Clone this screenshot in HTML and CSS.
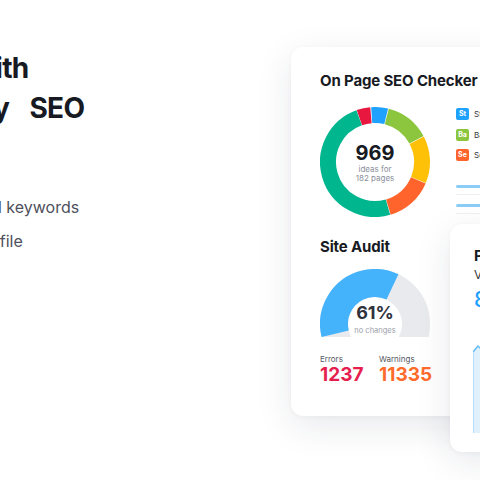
FILE: index.html
```html
<!DOCTYPE html>
<html lang="en">
<head>
<meta charset="utf-8">
<title>SEO tools</title>
<link rel="stylesheet" href="styles.css">
</head>
<body>
<div class="hero">
  <div class="copy">
    <h1 class="headline">Grow with<br>easy SEO</h1>
    <ul class="points">
      <li>Find all keywords</li>
      <li>Fix profile</li>
    </ul>
  </div>
  <div class="visual">
    <div class="card main-card">
      <h2 class="card-title">On Page SEO Checker</h2>
      <div class="checker">
        <div class="donut">
          <svg class="donut-svg" width="110" height="110" viewBox="0 0 110 110">
            <g fill="none" stroke-width="16">
              <circle cx="55" cy="55" r="47" stroke="#e8173f" stroke-dasharray="11.9 300" transform="rotate(250.6 55 55)"/>
              <circle cx="55" cy="55" r="47" stroke="#1ea1ff" stroke-dasharray="14.6 300" transform="rotate(266 55 55)"/>
              <circle cx="55" cy="55" r="47" stroke="#8cc63f" stroke-dasharray="38.8 300" transform="rotate(-75.5 55 55)"/>
              <circle cx="55" cy="55" r="47" stroke="#ffc107" stroke-dasharray="40.9 300" transform="rotate(-27.5 55 55)"/>
              <circle cx="55" cy="55" r="47" stroke="#ff642d" stroke-dasharray="41.3 300" transform="rotate(23 55 55)"/>
              <circle cx="55" cy="55" r="47" stroke="#00b68f" stroke-dasharray="144.3 300" transform="rotate(74 55 55)"/>
            </g>
          </svg>
          <div class="donut-center">
            <div class="donut-num">969</div>
            <div class="donut-sub">ideas for</div>
            <div class="donut-sub">182 pages</div>
          </div>
        </div>
        <div class="side">
          <ul class="legend">
            <li><span class="badge b-st">St</span><span class="legend-label">Strategy ideas</span></li>
            <li><span class="badge b-ba">Ba</span><span class="legend-label">Backlinks ideas</span></li>
            <li><span class="badge b-se">Se</span><span class="legend-label">Semantic ideas</span></li>
          </ul>
          <div class="bars">
            <div class="bar-row"><div class="bar"></div></div>
            <div class="bar-row"><div class="bar"></div></div>
          </div>
        </div>
      </div>
      <h2 class="card-title audit-title">Site Audit</h2>
      <div class="gauge">
        <svg class="gauge-svg" width="110" height="68" viewBox="0 0 110 68">
          <g fill="none" stroke-width="28">
            <circle cx="55" cy="55" r="41" stroke="#e9eaee"/>
            <circle cx="55" cy="55" r="41" stroke="#44b3fb" stroke-dasharray="92.1 300" transform="rotate(166.3 55 55)"/>
          </g>
        </svg>
        <div class="gauge-center">
          <div class="gauge-num">61%</div>
          <div class="gauge-sub">no changes</div>
        </div>
      </div>
      <div class="stats">
        <div class="stat">
          <div class="stat-label">Errors</div>
          <div class="stat-num err">1237</div>
        </div>
        <div class="stat">
          <div class="stat-label">Warnings</div>
          <div class="stat-num warn">11335</div>
        </div>
      </div>
    </div>
    <div class="card track-card">
      <h2 class="card-title">Position Tracking</h2>
      <div class="track-label">Visibility</div>
      <div class="track-num">84.21%</div>
      <svg class="chart" width="180" height="90" viewBox="0 0 180 90">
        <path d="M0 9 L5 3 L14 12 L30 18 L60 26 L100 20 L140 34 L180 30 L180 90 L0 90 Z" fill="#e0f1fd"/>
        <path d="M0 9 L5 3 L14 12 L30 18 L60 26 L100 20 L140 34 L180 30" fill="none" stroke="#63bdf6" stroke-width="1.5"/>
        <path d="M0.5 9 L0.5 90" stroke="#b9dff8" stroke-width="1"/>
      </svg>
    </div>
  </div>
</div>
</body>
</html>
```

FILE: styles.css
```css
* { box-sizing: border-box; }
html, body {
  margin: 0;
  padding: 0;
  background: #ffffff;
}
body {
  width: 480px;
  height: 480px;
  overflow: hidden;
  font-family: Inter, "Noto Sans", sans-serif;
  color: #171a22;
}
.hero {
  display: flex;
  height: 480px;
}
.copy {
  flex: 0 0 339px;
  margin-left: -48px;
}
.headline {
  margin: 48px 0 0 -6px;
  font-size: 28px;
  line-height: 40px;
  font-weight: 700;
  letter-spacing: -0.6px;
  word-spacing: 14px;
  text-indent: -64px;
  color: #171a22;
  white-space: nowrap;
}
.points {
  list-style: none;
  margin: 62px 0 0 -4px;
  padding: 0;
  font-size: 16px;
  line-height: 34px;
  color: #4e505b;
  white-space: nowrap;
}
.visual {
  position: relative;
  flex: 0 0 260px;
}
.card {
  background: #ffffff;
  border-radius: 12px;
  box-shadow: 0 10px 36px rgba(30, 40, 70, 0.10), 0 1px 4px rgba(30, 40, 70, 0.04);
}
.main-card {
  margin-top: 47px;
  width: 250px;
  height: 369px;
  padding: 25px 0 0 29px;
}
.card-title {
  margin: 0;
  font-size: 15px;
  line-height: 18px;
  font-weight: 700;
  letter-spacing: -0.15px;
  color: #171a22;
  white-space: nowrap;
}
.checker {
  display: flex;
  gap: 26px;
  margin-top: 17px;
}
.donut {
  display: grid;
  width: 110px;
  height: 110px;
  flex: 0 0 110px;
}
.donut-svg, .donut-center {
  grid-area: 1 / 1;
}
.donut-svg { display: block; }
.donut-center {
  align-self: center;
  text-align: center;
}
.donut-num {
  font-size: 20px;
  line-height: 23px;
  font-weight: 700;
  color: #171a22;
}
.donut-sub {
  font-size: 8px;
  line-height: 9px;
  color: #8a8e99;
}
.side {
  flex: 0 0 90px;
  padding-top: 1px;
}
.legend {
  list-style: none;
  margin: 0;
  padding: 0;
  display: flex;
  flex-direction: column;
  gap: 8.5px;
}
.legend li {
  display: flex;
  align-items: center;
  height: 12px;
}
.badge {
  width: 13px;
  height: 12px;
  border-radius: 2px;
  color: #fff;
  font-size: 7px;
  font-weight: 700;
  line-height: 12px;
  text-align: center;
}
.b-st { background: #1ea1ff; }
.b-ba { background: #8cc63f; }
.b-se { background: #ff642d; }
.legend-label {
  margin-left: 5px;
  font-size: 8px;
  color: #333640;
  white-space: nowrap;
}
.bars {
  margin-top: 24px;
}
.bar-row {
  padding-bottom: 6px;
  border-bottom: 1px solid #eff0f3;
}
.bar-row + .bar-row {
  margin-top: 9px;
}
.bar {
  height: 3px;
  width: 80px;
  border-radius: 2px;
  background: #8ccdf6;
}
.audit-title {
  margin-top: 21px;
}
.gauge {
  display: grid;
  width: 110px;
  height: 68px;
  margin-top: 13px;
}
.gauge-svg, .gauge-center {
  grid-area: 1 / 1;
}
.gauge-svg { display: block; }
.gauge-center {
  align-self: end;
  text-align: center;
  padding-bottom: 2px;
}
.gauge-num {
  font-size: 18px;
  line-height: 20px;
  font-weight: 700;
  color: #2f323b;
}
.gauge-sub {
  margin-top: 3px;
  font-size: 7.5px;
  line-height: 9px;
  color: #9a9ea8;
}
.stats {
  display: grid;
  grid-template-columns: 59px auto;
  margin-top: 18px;
}
.stat-label {
  font-size: 8px;
  line-height: 9px;
  color: #555864;
}
.stat-num {
  font-size: 19px;
  line-height: 22px;
  font-weight: 700;
}
.err { color: #e61e4d; }
.warn { color: #ff6b2b; }
.track-card {
  position: absolute;
  left: 159px;
  top: 224px;
  width: 200px;
  height: 228px;
  padding: 22.5px 0 0 24px;
  overflow: hidden;
}
.track-label {
  margin-top: 2px;
  font-size: 12px;
  line-height: 16px;
  color: #333640;
}
.track-num {
  margin-top: 5px;
  font-size: 21px;
  line-height: 24px;
  font-weight: 500;
  color: #1ea1ff;
}
.chart {
  display: block;
  margin: 31px 0 0 -1px;
}
```
